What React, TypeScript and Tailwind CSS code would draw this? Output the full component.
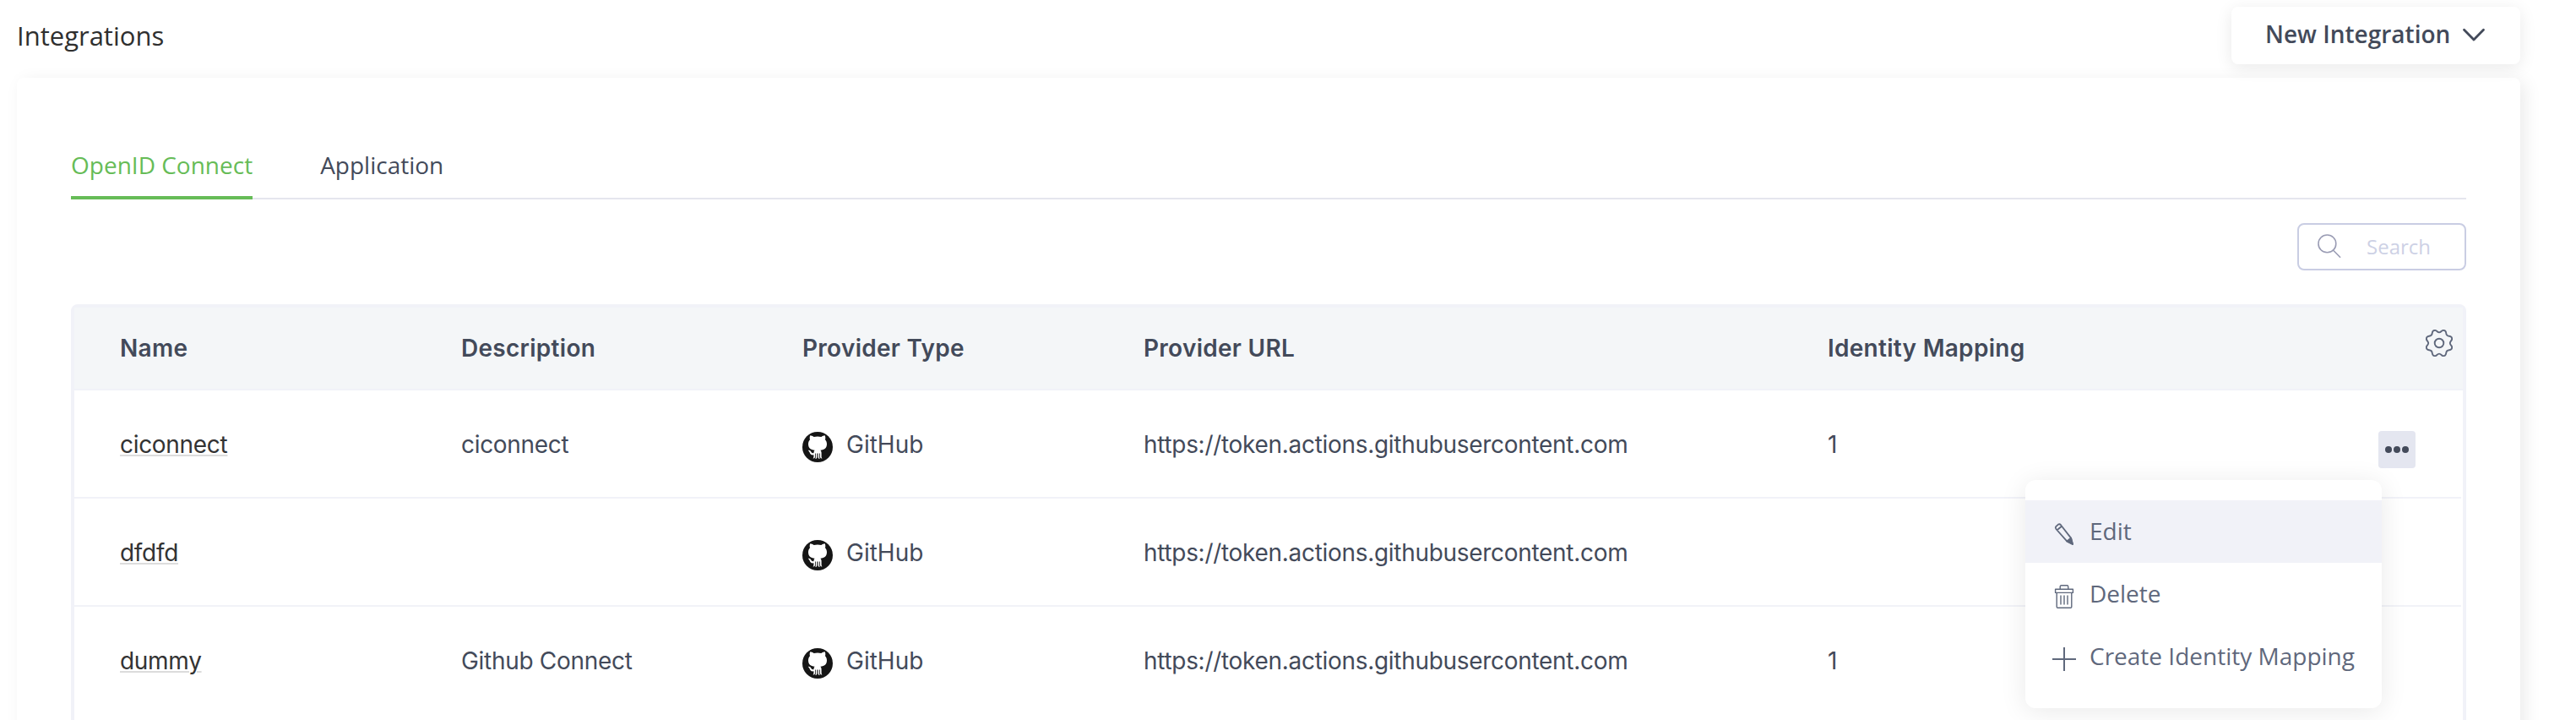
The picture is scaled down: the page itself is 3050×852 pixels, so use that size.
const COLS = "grid grid-cols-[404px_404px_404px_810px_1fr]";

const rows = [
  { name: "ciconnect", description: "ciconnect", mapping: "1" },
  { name: "dfdfd", description: "", mapping: "" },
  { name: "dummy", description: "Github Connect", mapping: "1" },
];

function ChevronIcon() {
  return (
    <svg className="h-[18px] w-[28px]" viewBox="0 0 28 18" fill="none" stroke="#434a5a" strokeWidth="2.8" strokeLinecap="round" strokeLinejoin="round">
      <path d="M2.5 3.2 14 15 25.5 3.2" />
    </svg>
  );
}

function SearchIcon() {
  return (
    <svg className="h-[28px] w-[28px]" viewBox="0 0 28 28" fill="none" stroke="#9a9cb4" strokeWidth="1.6" strokeLinecap="round">
      <circle cx="11.4" cy="11.4" r="10.4" />
      <path d="M18.4 19 26.6 27.2" />
    </svg>
  );
}

function GearIcon() {
  return (
    <svg className="h-[32px] w-[32px]" viewBox="0 0 32 32" fill="none" stroke="#5f687c" strokeWidth="1.9" strokeLinejoin="round">
      <circle cx="16" cy="16" r="5.3" />
      <path d="M16 3.4C18 3.4 18.8 1.4 20.4 .9C22.6 .6 24 2 24.2 4C24.4 6.5 25.5 7.6 28 7.8C30 8 31.4 9.4 31.1 11.6C30.6 13.2 28.8 14 28.8 16C28.8 18 30.6 18.8 31.1 20.4C31.4 22.6 30 24 28 24.2C25.5 24.4 24.4 25.5 24.2 28C24 30 22.6 31.4 20.4 31.1C18.8 30.6 18 28.6 16 28.6C14 28.6 13.2 30.6 11.6 31.1C9.4 31.4 8 30 7.8 28C7.6 25.5 6.5 24.4 4 24.2C2 24 .6 22.6 .9 20.4C1.4 18.8 3.2 18 3.2 16C3.2 14 1.4 13.2 .9 11.6C.6 9.4 2 8 4 7.8C6.5 7.6 7.6 6.5 7.8 4C8 2 9.4 .6 11.6 .9C13.2 1.4 14 3.4 16 3.4Z" />
    </svg>
  );
}

function GitHubIcon() {
  return (
    <svg className="h-[36px] w-[36px]" viewBox="0 0 36 36">
      <circle cx="18" cy="18" r="18" fill="#151515" />
      <path
        fill="#fff"
        d="M9.3 4.2C10.6 4.2 12.3 5 13.6 5.9C16.4 5.2 19.6 5.2 22.4 5.9C23.7 5 25.4 4.2 26.7 4.2C27.4 5.9 27.5 7.7 27 9.2C28.5 10.8 29 12.6 29 14.6C29 19.2 26.2 21.3 21.4 21.8C22.2 22.6 22.6 23.6 22.6 25V29.4C22.6 30.2 23 30.8 23.4 31.4C22 31.6 21 31 21 29.6V25.6H20.2V30.2C20.2 31 20.4 31.6 20.7 32C19.3 32 18.6 31.2 18.6 30V25.6H17.4V30C17.4 31.2 16.7 32 15.3 32C15.6 31.6 15.8 31 15.8 30.2V25.6H15V29.6C15 31 14 31.6 12.6 31.4C13 30.8 13.4 30.2 13.4 29.4V27.3C10.4 27.8 9.4 26.4 8.7 24.5C8.2 23.3 7.5 22.6 6.8 22C8.6 21.5 9.6 22.4 10.4 23.8C11.2 25.2 12.2 25.5 13.5 25C13.5 23.6 13.8 22.6 14.6 21.8C9.8 21.3 7 19.2 7 14.6C7 12.6 7.5 10.8 9 9.2C8.5 7.7 8.6 5.9 9.3 4.2Z"
      />
    </svg>
  );
}

function PencilIcon() {
  return (
    <svg className="h-[28px] w-[28px]" viewBox="0 0 28 28" fill="none" stroke="#5f687c" strokeWidth="1.8" strokeLinejoin="round">
      <path d="M4.2 5.2 7 2.6Q8.6 1.6 10 3.2L22 18.6 24 26 17.2 22.4 4.4 8Q3.2 6.4 4.2 5.2ZM5.6 9.2 11 4.8" />
      <path d="M24 26 17.2 22.4 22 18.6Z" fill="#5f687c" />
    </svg>
  );
}

function TrashIcon() {
  return (
    <svg className="h-[28px] w-[28px]" viewBox="0 0 28 28" fill="none" stroke="#5f687c" strokeWidth="1.4" strokeLinejoin="round">
      <path d="M3.6 5.2H24.4V9.4H3.6ZM9.2 5V2.4Q9.2 .8 10.6 .8H17.4Q18.8 .8 18.8 2.4V5M5.2 9.6V26Q5.2 27.2 6.4 27.2H21.6Q22.8 27.2 22.8 26V9.6" />
      <path d="M10 12.4V23.6M14 12.4V23.6M18 12.4V23.6" />
    </svg>
  );
}

function PlusIcon() {
  return (
    <svg className="h-[28px] w-[28px]" viewBox="0 0 28 28" fill="none" stroke="#5f687c" strokeWidth="2">
      <path d="M14 0V28M0 14H28" />
    </svg>
  );
}

function RowMenu() {
  const items = [
    { label: "Edit", icon: <PencilIcon />, active: true },
    { label: "Delete", icon: <TrashIcon />, active: false },
    { label: "Create Identity Mapping", icon: <PlusIcon />, active: false },
  ];
  return (
    <div className="absolute top-[58px] right-[40px] z-10 h-[270px] w-[422px] rounded-xl bg-white py-6 font-['Open_Sans',sans-serif] tracking-normal shadow-[0_4px_32px_rgba(0,0,0,0.09)]">
      {items.map((item) => (
        <div key={item.label} className={`flex h-[74px] items-center pl-8 ${item.active ? "bg-[#f1f2f8]" : ""}`}>
          <span className="mt-[6px]">{item.icon}</span>
          <span className="mb-[2px] ml-4 text-[28px] leading-[38px] whitespace-nowrap text-[#5f687c]">{item.label}</span>
        </div>
      ))}
    </div>
  );
}

export default function App() {
  return (
    <div className="h-[852px] w-[3050px] overflow-hidden bg-white font-['Open_Sans',sans-serif] text-[#434a5a]">
      <header className="relative z-10 flex h-[92px] items-start justify-between pt-2 pr-[66px] pl-5">
        <h1 className="pt-[12px] text-[31px] leading-[44px] text-[#2f2f2f]">Integrations</h1>
        <button className="flex h-[68px] w-[342px] items-center rounded-lg bg-white pb-[2px] pl-[40px] shadow-[0_4px_20px_rgba(0,0,0,0.09)]">
          <span className="mb-[2px] text-[28px] leading-[38px] font-semibold whitespace-nowrap">New Integration</span>
          <span className="ml-[14px]">
            <ChevronIcon />
          </span>
        </button>
      </header>

      <main className="mr-[66px] ml-5 h-[900px] rounded-lg bg-white px-16 pt-[72px] shadow-[6px_4px_20px_rgba(0,0,0,0.08)]">
        <nav className="flex h-[72px] gap-20 border-b-2 border-[#e5e6ee] text-[28px]">
          <a className="h-[72px] border-b-4 border-[#66bc57] pt-[12px] leading-[38px] text-[#66bc57]">OpenID Connect</a>
          <a className="pt-[12px] leading-[38px]">Application</a>
        </nav>

        <div className="mt-7 flex justify-end">
          <div className="flex h-14 w-[200px] items-center rounded-lg border-2 border-[#c9cde3] pl-[22px]">
            <span className="mb-[2px]">
              <SearchIcon />
            </span>
            <span className="ml-[30px] text-[24px] leading-8 text-[#cdd1e5]">Search</span>
          </div>
        </div>

        <section className="mt-10 h-[600px] rounded-lg border-4 border-[#f1f2f8] font-[Inter,sans-serif] text-[28px]">
          <div className={`${COLS} relative h-[98px] items-center border-b-2 border-[#f1f2f8] bg-[#f4f6f8] pl-[54px] font-semibold tracking-[0.28px]`}>
            <span>Name</span>
            <span>Description</span>
            <span>Provider Type</span>
            <span>Provider URL</span>
            <span>Identity Mapping</span>
            <span className="absolute top-[26px] right-[12px]">
              <GearIcon />
            </span>
          </div>
          {rows.map((row, i) => (
            <div
              key={row.name}
              className={`${COLS} relative mr-[2px] h-[128px] items-center border-b-2 pt-[2px] pl-[54px] tracking-[-0.3px] ${i < 2 ? "border-[#f1f2f8]" : "border-transparent"}`}
            >
              <span className="text-[#333]">
                <span className="underline decoration-[#dcdcdc] decoration-2 underline-offset-[2px]">{row.name}</span>
              </span>
              <span>{row.description}</span>
              <span className="flex items-center">
                <span className="mt-[6px]">
                  <GitHubIcon />
                </span>
                <span className="ml-4 tracking-normal">GitHub</span>
              </span>
              <span>https://token.actions.githubusercontent.com</span>
              <span>{row.mapping}</span>
              {i === 0 && (
                <div className="absolute top-[48px] right-[54px]">
                  <button className="flex h-11 w-11 items-center justify-center gap-[2px] rounded bg-[#e4e6f0]">
                    <span className="h-2 w-2 rounded-full bg-[#434a5a]" />
                    <span className="h-2 w-2 rounded-full bg-[#434a5a]" />
                    <span className="h-2 w-2 rounded-full bg-[#434a5a]" />
                  </button>
                  <RowMenu />
                </div>
              )}
            </div>
          ))}
        </section>
      </main>
    </div>
  );
}
